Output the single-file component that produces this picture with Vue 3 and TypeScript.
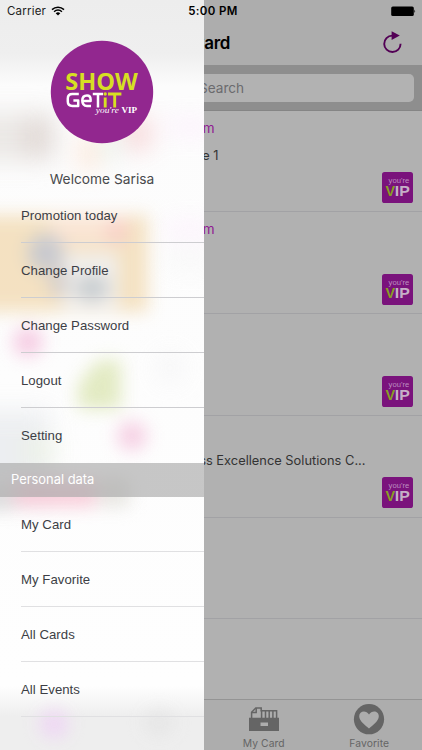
<script setup lang="ts">
interface CardRow {
  owner: string
  title: string
  badge: boolean
}

const cards: CardRow[] = [
  { owner: 'm', title: 'e 1', badge: true },
  { owner: 'm', title: '', badge: true },
  { owner: '', title: '', badge: true },
  { owner: '', title: 'ss Excellence Solutions C...', badge: true },
  { owner: '', title: '', badge: false },
]

const accountItems: string[] = ['Promotion today', 'Change Profile', 'Change Password', 'Logout', 'Setting']
const personalItems: string[] = ['My Card', 'My Favorite', 'All Cards', 'All Events']
</script>

<template>
  <div class="phone">
    <main class="page">
      <header class="navbar">
        <h1 class="nav-title">Card</h1>
        <svg class="refresh" width="22" height="24" viewBox="0 0 22 24">
          <path d="M11.2 4.6A8.2 8.2 0 1 0 19.6 12.8" fill="none" stroke="#530055" stroke-width="1.9" />
          <path d="M10.6 0.2L18.8 4.6L10.6 9Z" fill="#530055" />
        </svg>
      </header>
      <div class="search-wrap">
        <div class="search"><span>Search</span></div>
      </div>
      <section class="cards">
        <article v-for="(card, i) in cards" :key="i" class="card">
          <div class="card-text">
            <div class="owner">{{ card.owner }}</div>
            <div class="card-title" :class="{ long: card.title.length > 5 }">{{ card.title }}</div>
          </div>
          <svg v-if="card.badge" class="vip" viewBox="0 0 31 31">
            <rect width="31" height="31" rx="2.6" fill="#7a137c" />
            <text x="6.6" y="11.4" font-family="Liberation Sans, sans-serif" font-size="7.4" fill="#bd8fc0" textLength="20.6" lengthAdjust="spacingAndGlyphs">you're</text>
            <text x="3.4" y="23.6" font-family="Liberation Sans, sans-serif" font-weight="700" font-size="14.4" fill="#88a023" textLength="9.6" lengthAdjust="spacingAndGlyphs">V</text>
            <text x="12.8" y="23.6" font-family="Liberation Sans, sans-serif" font-weight="700" font-size="14.4" fill="#c6afc7" textLength="15" lengthAdjust="spacingAndGlyphs">IP</text>
          </svg>
        </article>
      </section>
      <nav class="tabbar">
        <div class="tab"></div>
        <div class="tab"></div>
        <div class="tab">
          <svg width="32" height="32" viewBox="0 0 32 32">
            <path d="M3.6 14V8.2L7.8 4H13.2V6.8H28.6V14" fill="none" stroke="#656565" stroke-width="1.5" />
            <path d="M3.6 8.6H8.2V4M13.6 6V14M17.5 7V14M21.2 7V14M24.9 7V14" fill="none" stroke="#656565" stroke-width="1.5" />
            <path d="M1 13.7H31V27H1Z M12.5 18.5V22H20V18.5Z" fill="#656565" fill-rule="evenodd" />
          </svg>
          <span>My Card</span>
        </div>
        <div class="tab">
          <svg width="32" height="32" viewBox="0 0 32 32">
            <circle cx="16" cy="15.2" r="15.1" fill="#656565" />
            <path d="M16 24.6C12.5 21.2 6.2 17 6.2 12.2C6.2 6.8 13.2 5.8 16 10.6C18.8 5.8 25.8 6.8 25.8 12.2C25.8 17 19.5 21.2 16 24.6Z" fill="#adadad" />
          </svg>
          <span>Favorite</span>
        </div>
      </nav>
    </main>

    <aside class="drawer">
      <svg class="frost" width="204" height="750" viewBox="0 0 204 750">
        <defs>
          <filter id="soft" x="-100%" y="-100%" width="300%" height="300%" color-interpolation-filters="sRGB"><feGaussianBlur stdDeviation="12" /></filter>
          <filter id="mid" x="-100%" y="-100%" width="300%" height="300%" color-interpolation-filters="sRGB"><feGaussianBlur stdDeviation="8.5" /></filter>
          <linearGradient id="base" x1="0" y1="0" x2="0" y2="750" gradientUnits="userSpaceOnUse">
            <stop offset="0" stop-color="#ededed" />
            <stop offset=".072" stop-color="#efefef" />
            <stop offset=".115" stop-color="#fcfcfc" />
            <stop offset=".915" stop-color="#fefefe" />
            <stop offset=".955" stop-color="#eeeeee" />
            <stop offset="1" stop-color="#eeeeee" />
          </linearGradient>
        </defs>
        <rect width="204" height="750" fill="url(#base)" />
        <g filter="url(#soft)" opacity="0.85">
          <rect x="-30" y="112" width="85" height="50" fill="#e9e6e3" />
          <rect x="24" y="118" width="28" height="38" fill="#ddd3cf" />
          <rect x="80" y="136" width="18" height="34" fill="#fde3d2" />
          <rect x="102" y="130" width="18" height="30" fill="#e6f3ec" />
          <rect x="126" y="118" width="24" height="32" fill="#f7cfd1" />
          <rect x="165" y="120" width="50" height="14" fill="#fdeefd" />
          <rect x="165" y="223" width="50" height="14" fill="#fdeefd" />
          <rect x="165" y="250" width="50" height="18" fill="#f7f7f7" />
          <ellipse cx="170" cy="368" rx="13" ry="15" fill="#f4f4f5" />
          <rect x="-30" y="410" width="80" height="90" fill="#eaecef" />
          <ellipse cx="40" cy="450" rx="18" ry="9" fill="#e8f1db" />
        </g>
        <g filter="url(#mid)" opacity="0.88">
          <rect x="-30" y="215" width="178" height="97" fill="#f3deba" />
          <rect x="50" y="217" width="78" height="26" fill="#fae2cf" />
          <rect x="62" y="253" width="56" height="56" fill="#f0eeec" />
          <circle cx="117" cy="231" r="11" fill="#f9c8c0" />
          <ellipse cx="46" cy="253" rx="18" ry="19" fill="#c2c3c9" />
          <rect x="50" y="268" width="18" height="28" fill="#d0c9c6" />
          <ellipse cx="92" cy="288" rx="17" ry="14" fill="#c3c8cb" />
          <circle cx="28" cy="342" r="15" fill="#f5c6e0" />
          <path d="M98 360H121V409H78V384Z" fill="#dfe8bb" />
          <circle cx="132" cy="436" r="15" fill="#f5cbe1" />
          <rect x="-30" y="486" width="44" height="24" fill="#dadada" />
          <rect x="14" y="480" width="82" height="27" fill="#f8c8d6" />
          <rect x="98" y="478" width="32" height="29" fill="#e5e3de" />
          <circle cx="54" cy="724" r="14" fill="#efd3f5" />
          <ellipse cx="159" cy="723" rx="15" ry="13" fill="#e5e5e5" />
        </g>
      </svg>
      <div class="drawer-body">
        <div class="profile">
          <svg class="logo" width="104" height="104" viewBox="0 0 104 104">
            <circle cx="52" cy="52" r="51.2" fill="#92278f" />
            <text x="15.2" y="49.8" font-family="Open Sans, sans-serif" font-weight="700" font-size="23" fill="#d7df23" textLength="72.6" lengthAdjust="spacingAndGlyphs">SHOW</text>
            <g fill="none" stroke-width="2.5" stroke-linejoin="round">
              <path d="M28.8 54H22.4Q17.8 54 17.8 58.6V61.6Q17.8 66 22.4 66H28.2V60.6H23.4" stroke="#fff" />
              <path d="M32.5 61H40.6V59.4Q40.6 55.4 37 55.4Q32.3 55.4 32.3 60.6Q32.3 66 37 66H41" stroke="#fff" />
              <path d="M42.8 54H53M48 54V67.5" stroke="#fff" />
              <path d="M55.2 57.4V67.5M58 54H71.4M64.7 54V67.5" stroke="#d7df23" stroke-width="2.9" />
            </g>
            <circle cx="55.2" cy="54" r="1.7" fill="#d7df23" />
            <text x="45.8" y="72.6" font-family="Liberation Serif, serif" font-style="italic" font-size="8.5" fill="#fff" textLength="23" lengthAdjust="spacingAndGlyphs">you're</text>
            <text x="71.4" y="72.6" font-family="Liberation Serif, serif" font-weight="700" font-size="8.5" fill="#fff" textLength="15.6" lengthAdjust="spacingAndGlyphs">VIP</text>
          </svg>
          <div class="welcome">Welcome Sarisa</div>
        </div>
        <ul class="menu">
          <li v-for="item in accountItems" :key="item">{{ item }}</li>
        </ul>
        <div class="section-head">Personal data</div>
        <ul class="menu personal">
          <li v-for="item in personalItems" :key="item">{{ item }}</li>
        </ul>
      </div>
    </aside>

    <div class="statusbar">
      <div class="carrier">
        <span>Carrier</span>
        <svg width="14" height="10" viewBox="0 0 14 10">
          <path d="M1 3.6A8.6 8.6 0 0 1 13 3.6M3.1 5.7A5.6 5.6 0 0 1 10.9 5.7" fill="none" stroke="#000" stroke-width="1.5" />
          <path d="M7 9.6L4.7 7.3A3.3 3.3 0 0 1 9.3 7.3Z" fill="#000" />
        </svg>
      </div>
      <div class="clock">5:00 PM</div>
      <div class="battery">
        <svg width="26" height="11" viewBox="0 0 26 11">
          <rect x="0.2" y="0.5" width="22.6" height="9.6" rx="1.6" fill="#000" />
          <path d="M23.4 3.6Q25 5.3 23.4 7Z" fill="#000" />
        </svg>
      </div>
    </div>
  </div>
</template>

<style>
body {
  margin: 0;
  overflow: hidden;
}
</style>

<style scoped>
.phone {
  position: relative;
  width: 422px;
  height: 750px;
  overflow: hidden;
  font-family: Inter, "Liberation Sans", sans-serif;
}
.page {
  display: flex;
  flex-direction: column;
  height: 750px;
  background: #b1b1b1;
}
.navbar {
  box-sizing: border-box;
  display: grid;
  grid-template-columns: 1fr 37px 1fr;
  align-items: center;
  height: 65px;
  padding: 21px 0 0;
  background: #adadad;
}
.nav-title {
  grid-column: 2;
  justify-self: center;
  margin: 0;
  font-size: 17px;
  line-height: 22px;
  font-weight: 600;
  letter-spacing: -0.4px;
}
.refresh {
  justify-self: end;
  margin-right: 19.5px;
}
.search-wrap {
  box-sizing: border-box;
  height: 45.5px;
  padding: 8.5px 8.5px 8px;
  background: #8e8e8e;
  border-bottom: 1px solid #858585;
}
.search {
  box-sizing: border-box;
  height: 28.5px;
  padding-left: 190.5px;
  border-radius: 5px;
  background: #b2b2b2;
  color: #6b6b6e;
  font-size: 13.6px;
  line-height: 28px;
}
.cards {
  flex: 1;
}
.card {
  box-sizing: border-box;
  display: flex;
  justify-content: space-between;
  align-items: flex-start;
  height: 101.8px;
  padding: 0 8.7px 0 0;
  border-bottom: 1px solid #a2a2a5;
}
.card-text {
  width: 375px;
}
.owner {
  width: 214.5px;
  height: 18px;
  margin-top: 8px;
  text-align: right;
  color: #8f1b91;
  font-size: 13.5px;
  line-height: 18px;
}
.card-title {
  width: 218.5px;
  margin-top: 10.5px;
  text-align: right;
  color: #333;
  font-size: 12.85px;
  line-height: 18px;
  white-space: nowrap;
}
.card-title.long {
  width: 365.5px;
}
.vip {
  width: 31px;
  height: 31px;
  margin-top: 61.5px;
}
.tabbar {
  box-sizing: border-box;
  display: grid;
  grid-template-columns: repeat(4, 1fr);
  height: 51px;
  border-top: 1px solid #949494;
  background: #adadad;
}
.tab {
  display: flex;
  flex-direction: column;
  align-items: center;
  padding-top: 4px;
  color: #656565;
  font-size: 10.3px;
  line-height: 13px;
}
.tab span {
  margin-top: 1px;
  letter-spacing: 0.1px;
}
.drawer {
  position: absolute;
  inset: 0 auto 0 0;
  width: 204px;
  overflow: hidden;
}
.frost {
  position: absolute;
  inset: 0;
}
.drawer-body {
  position: relative;
}
.profile {
  box-sizing: border-box;
  display: flex;
  flex-direction: column;
  align-items: center;
  height: 188px;
  padding-top: 40px;
}
.logo {
  display: block;
}
.welcome {
  margin-top: 26px;
  color: #494a4d;
  font-size: 13.75px;
  line-height: 18px;
  white-space: nowrap;
}
.menu {
  margin: 0;
  padding: 0 0 0 21px;
  list-style: none;
}
.menu li {
  box-sizing: border-box;
  height: 55px;
  border-bottom: 1px solid #cdcdd0;
  color: #3c3e45;
  font-family: "Liberation Sans", Arial, sans-serif;
  font-size: 13.2px;
  letter-spacing: 0.03px;
  line-height: 55px;
}
.menu:not(.personal) li:last-child {
  border-bottom: 0;
}
.menu.personal li {
  border-bottom-color: #e0e0e2;
}
.section-head {
  height: 34px;
  padding-left: 11px;
  background: rgba(168, 168, 168, 0.64);
  color: #fff;
  font-size: 12.9px;
  line-height: 33px;
}
.statusbar {
  position: absolute;
  inset: 0 0 auto 0;
  box-sizing: border-box;
  display: grid;
  grid-template-columns: 1fr auto 1fr;
  align-items: center;
  height: 22px;
  padding: 0 5px 0 7px;
  font-size: 11.5px;
  line-height: 22px;
}
.carrier {
  display: flex;
  align-items: center;
  gap: 5px;
  color: #222;
  letter-spacing: 0.2px;
}
.clock {
  padding-left: 2px;
  font-weight: 600;
  letter-spacing: 0.35px;
}
.battery {
  display: flex;
  justify-content: flex-end;
}
</style>
